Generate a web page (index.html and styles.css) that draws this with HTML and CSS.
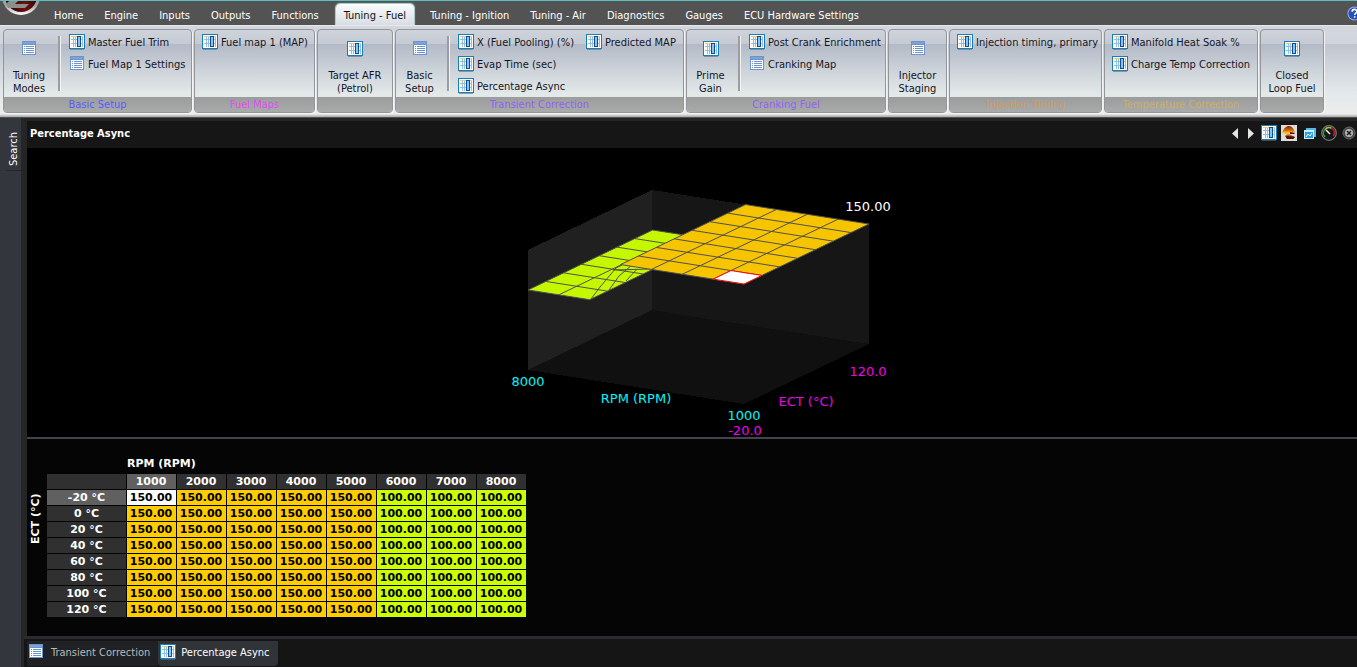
FILE: index.html
```html
<!DOCTYPE html>
<html lang="en">
<head>
<meta charset="utf-8">
<title>Percentage Async</title>
<link rel="stylesheet" href="styles.css">
</head>
<body>
<svg class="defs" aria-hidden="true">
  <defs>
    <linearGradient id="metal" x1="0" y1="0" x2="0" y2="1"><stop offset="0" stop-color="#777"/><stop offset=".75" stop-color="#a5a5a5"/><stop offset="1" stop-color="#fff"/></linearGradient>
    <radialGradient id="ruby" cx=".6" cy=".8" r=".5"><stop offset="0" stop-color="#7c1010"/><stop offset="1" stop-color="#240404"/></radialGradient>
    <linearGradient id="fire" x1="0" y1="0" x2="0" y2="1"><stop offset="0" stop-color="#8e1c08"/><stop offset=".35" stop-color="#d8720c"/><stop offset=".55" stop-color="#ffd23a"/><stop offset=".8" stop-color="#a33008"/><stop offset="1" stop-color="#3d0b04"/></linearGradient>
    <symbol id="i-map" viewBox="0 0 16 16">
      <path fill="#1580b8" d="M0 0h16v15H0z"/><path fill="#fff" d="M1 1h14v13H1z"/>
      <path fill="#fbc56a" d="M2 2h12v1H2z"/>
      <path fill="#8fc0e4" d="M2 5h12v1H2zM2 9h12v1H2zM4 3h1v10H4zM6 3h1v10H6zM13 3h1v10h-1z"/>
      <path fill="#0d4f9c" d="M8 2h4v11H8z"/><path fill="#8cc3ee" d="M9 3h2v9H9z"/>
      <path fill="#5f6a76" opacity=".6" d="M1 15h14v1H1z"/>
    </symbol>
    <symbol id="i-list" viewBox="0 0 16 16">
      <path fill="#6c93cd" d="M1 0h14v14H1z"/><path fill="#7ca2d8" d="M2 1h12v2H2z"/>
      <path fill="#fff" d="M2 4h12v9H2z"/>
      <path fill="#6c93cd" d="M3 5h1v1H3zM5 5h8v1H5zM3 7h1v1H3zM5 7h8v1H5zM3 9h1v1H3zM5 9h8v1H5zM3 11h1v1H3zM5 11h8v1H5z"/>
    </symbol>
  </defs>
</svg>

<header class="menubar">
  <svg class="logo" viewBox="0 0 43 24" aria-label="Application menu" role="img">
    <circle cx="21" cy="-5" r="19" fill="url(#metal)"/>
    <circle cx="21" cy="-5" r="16" fill="url(#ruby)"/>
    <path fill="#8d8d8d" d="M9 0h9l-3 3h14l-4 4H8L6 3z"/>
  </svg>
  <nav class="menu">
    <a href="#">Home</a><a href="#">Engine</a><a href="#">Inputs</a><a href="#">Outputs</a><a href="#">Functions</a>
    <a href="#" class="active" aria-current="page">Tuning - Fuel</a>
    <a href="#">Tuning - Ignition</a><a href="#">Tuning - Air</a><a href="#">Diagnostics</a><a href="#">Gauges</a><a href="#">ECU Hardware Settings</a>
  </nav>
  <button class="help" aria-label="Help">
    <svg viewBox="0 0 16 16"><circle cx="8" cy="8" r="7.500" fill="#9bb4ea"/><circle cx="8" cy="8" r="6.500" fill="#2450b8"/><path d="M5.500 6.200c0-3.600 5-3.300 5-.4 0 1.800-2.300 1.700-2.300 3.700M8.200 11v1.600" fill="none" stroke="#fff" stroke-width="1.700"/></svg>
  </button>
</header>

<section class="ribbon" aria-label="Tuning - Fuel">
  <div class="group w-basic">
    <div class="tools">
      <button class="big"><svg class="icon"><use href="#i-list"/></svg><span>Tuning<br>Modes</span></button>
      <div class="stack split">
        <button class="small"><svg class="icon"><use href="#i-map"/></svg>Master Fuel Trim</button>
        <button class="small"><svg class="icon"><use href="#i-list"/></svg>Fuel Map 1 Settings</button>
      </div>
    </div>
    <div class="caption blue">Basic Setup</div>
  </div>
  <div class="group w-maps">
    <div class="tools"><div class="stack">
      <button class="small"><svg class="icon"><use href="#i-map"/></svg>Fuel map 1 (MAP)</button>
    </div></div>
    <div class="caption pink">Fuel Maps</div>
  </div>
  <div class="group w-afr">
    <div class="tools"><button class="big only"><svg class="icon"><use href="#i-map"/></svg><span>Target AFR<br>(Petrol)</span></button></div>
    <div class="caption"></div>
  </div>
  <div class="group w-transient">
    <div class="tools">
      <button class="big narrow"><svg class="icon"><use href="#i-list"/></svg><span>Basic<br>Setup</span></button>
      <div class="stack split">
        <button class="small"><svg class="icon"><use href="#i-map"/></svg>X (Fuel Pooling) (%)</button>
        <button class="small"><svg class="icon"><use href="#i-map"/></svg>Evap Time (sec)</button>
        <button class="small"><svg class="icon"><use href="#i-map"/></svg>Percentage Async</button>
      </div>
      <div class="stack">
        <button class="small"><svg class="icon"><use href="#i-map"/></svg>Predicted MAP</button>
      </div>
    </div>
    <div class="caption violet">Transient Correction</div>
  </div>
  <div class="group w-crank">
    <div class="tools">
      <button class="big narrow"><svg class="icon"><use href="#i-map"/></svg><span>Prime<br>Gain</span></button>
      <div class="stack split">
        <button class="small"><svg class="icon"><use href="#i-map"/></svg>Post Crank Enrichment</button>
        <button class="small"><svg class="icon"><use href="#i-list"/></svg>Cranking Map</button>
      </div>
    </div>
    <div class="caption violet">Cranking Fuel</div>
  </div>
  <div class="group w-staging">
    <div class="tools"><button class="big only"><svg class="icon"><use href="#i-list"/></svg><span>Injector<br>Staging</span></button></div>
    <div class="caption"></div>
  </div>
  <div class="group w-timing">
    <div class="tools"><div class="stack">
      <button class="small"><svg class="icon"><use href="#i-map"/></svg>Injection timing, primary</button>
    </div></div>
    <div class="caption copper">Injection Timing</div>
  </div>
  <div class="group w-temp">
    <div class="tools"><div class="stack">
      <button class="small"><svg class="icon"><use href="#i-map"/></svg>Manifold Heat Soak %</button>
      <button class="small"><svg class="icon"><use href="#i-map"/></svg>Charge Temp Correction</button>
    </div></div>
    <div class="caption sand">Temperature Correction</div>
  </div>
  <div class="group w-loop">
    <div class="tools"><button class="big only"><svg class="icon"><use href="#i-map"/></svg><span>Closed<br>Loop Fuel</span></button></div>
    <div class="caption"></div>
  </div>
</section>

<div class="workspace">
  <aside class="sidebar"><button class="search">Search</button></aside>
  <main class="document">
    <div class="panel">
      <div class="titlebar">
        <h1>Percentage Async</h1>
        <div class="titletools">
          <button class="arrow" aria-label="Previous"><svg viewBox="0 0 12 16"><path fill="#e4e4e4" d="M9 3v11L3 8.500z"/></svg></button>
          <button class="arrow" aria-label="Next"><svg viewBox="0 0 12 16"><path fill="#e4e4e4" d="M3 3v11l6-5.500z"/></svg></button>
          <button aria-label="Table view"><svg viewBox="0 0 16 16"><use href="#i-map"/></svg></button>
          <button aria-label="Surface view"><svg viewBox="0 0 16 16"><path fill="#ddd" d="M0 0h16v16H0z"/><path fill="url(#fire)" d="M1 8C3 3 5 1 8 1s5 3 6 7l-3-1-3 2 6 3-2 2H6l-2-3 2-2z"/><path fill="#4a0d05" d="M5 11l9 1-2 2H6zM9 7l5 1-1 1H9z"/></svg></button>
          <button aria-label="Windows"><svg viewBox="0 0 16 16"><path fill="#58b9e6" d="M5 3h10v9H5z"/><path fill="#c9effb" d="M3 5h10v9H3z"/><path fill="#299fd8" d="M4 7h8v6H4z"/><path d="M5 12l2-3 2 2 2-3" fill="none" stroke="#fff"/></svg></button>
          <button aria-label="Gauge"><svg viewBox="0 0 16 16"><circle cx="8" cy="8" r="7.300" fill="#181818" stroke="#757575" stroke-width="1.300"/><path d="M4 12A5.500 5.500 0 0 1 4 4.500" fill="none" stroke="#23a548" stroke-width="1.500"/><path d="M4 4.500A5.500 5.500 0 0 1 10.500 3.200" fill="none" stroke="#a9c93a" stroke-width="1.500"/><path d="M10.500 3.200A5.500 5.500 0 0 1 12.500 11" fill="none" stroke="#c81e1e" stroke-width="1.500"/><path d="M5 5l4 4" stroke="#fff" stroke-width="1.400"/></svg></button>
          <button aria-label="Close"><svg viewBox="0 0 16 16"><circle cx="8" cy="8" r="6" fill="#454545" stroke="#666"/><circle cx="8" cy="8" r="4" fill="#b5b5b5"/><path d="M6 6l4 4M10 6l-4 4" stroke="#222" stroke-width="1.600"/></svg></button>
        </div>
      </div>
      <div class="chart">
        <svg viewBox="492 149 400 288" role="img" aria-label="Surface plot of RPM and ECT">
          <g shape-rendering="crispEdges">
            <path fill="#202020" d="M528 250L652 190V310L528 370z"/>
            <path fill="#161616" d="M652 190L869 224V344L652 310z"/>
            <path fill="#101010" d="M652 310L869 344L744 404L528 370z"/>
          </g>
          <g class="mesh">
            <g transform="matrix(-30.86 -4.86 17.800 -8.570 744 324)">
              <path fill="#c5f800" d="M5 0H7V7H5z"/>
              <path d="M6 0V7M5 1H7M5 2H7M5 3H7M5 4H7M5 5H7M5 6H7"/>
            </g>
            <path d="M591 299L600 287L616 268L622 265M609 290L619 276L632 265M626 281L637 269M613 270L650 269"/>
            <g transform="matrix(-30.86 -4.86 17.860 -8.570 744 284)">
              <path fill="#f7c400" d="M0 0H4V7H0z"/>
              <path d="M1 0V7M2 0V7M3 0V7M0 1H4M0 2H4M0 3H4M0 4H4M0 5H4M0 6H4"/>
              <path class="picked" d="M0 0H1V1H0z"/>
            </g>
          </g>
          <g class="labels">
            <text x="868" y="211" fill="#fff">150.00</text>
            <text class="rpm" x="528" y="386">8000</text>
            <text class="rpm" x="636" y="403">RPM (RPM)</text>
            <text class="rpm" x="744" y="420">1000</text>
            <text class="ect" x="745" y="435">-20.0</text>
            <text class="ect" x="806" y="406">ECT (°C)</text>
            <text class="ect" x="868" y="376">120.0</text>
          </g>
        </svg>
      </div>
      <div class="grid">
        <div class="xaxis">RPM (RPM)</div>
        <div class="yaxis">ECT (°C)</div>
        <table>
          <thead><tr><th></th><th class="on">1000</th><th>2000</th><th>3000</th><th>4000</th><th>5000</th><th>6000</th><th>7000</th><th>8000</th></tr></thead>
          <tbody>
            <tr><th class="on">-20 °C</th><td class="sel">150.00</td><td>150.00</td><td>150.00</td><td>150.00</td><td>150.00</td><td class="lo">100.00</td><td class="lo">100.00</td><td class="lo">100.00</td></tr>
            <tr><th>0 °C</th><td>150.00</td><td>150.00</td><td>150.00</td><td>150.00</td><td>150.00</td><td class="lo">100.00</td><td class="lo">100.00</td><td class="lo">100.00</td></tr>
            <tr><th>20 °C</th><td>150.00</td><td>150.00</td><td>150.00</td><td>150.00</td><td>150.00</td><td class="lo">100.00</td><td class="lo">100.00</td><td class="lo">100.00</td></tr>
            <tr><th>40 °C</th><td>150.00</td><td>150.00</td><td>150.00</td><td>150.00</td><td>150.00</td><td class="lo">100.00</td><td class="lo">100.00</td><td class="lo">100.00</td></tr>
            <tr><th>60 °C</th><td>150.00</td><td>150.00</td><td>150.00</td><td>150.00</td><td>150.00</td><td class="lo">100.00</td><td class="lo">100.00</td><td class="lo">100.00</td></tr>
            <tr><th>80 °C</th><td>150.00</td><td>150.00</td><td>150.00</td><td>150.00</td><td>150.00</td><td class="lo">100.00</td><td class="lo">100.00</td><td class="lo">100.00</td></tr>
            <tr><th>100 °C</th><td>150.00</td><td>150.00</td><td>150.00</td><td>150.00</td><td>150.00</td><td class="lo">100.00</td><td class="lo">100.00</td><td class="lo">100.00</td></tr>
            <tr><th>120 °C</th><td>150.00</td><td>150.00</td><td>150.00</td><td>150.00</td><td>150.00</td><td class="lo">100.00</td><td class="lo">100.00</td><td class="lo">100.00</td></tr>
          </tbody>
        </table>
      </div>
    </div>
    <nav class="doctabs">
      <a href="#"><svg class="icon"><use href="#i-list"/></svg>Transient Correction</a>
      <a href="#" class="current" aria-current="page"><svg class="icon"><use href="#i-map"/></svg>Percentage Async</a>
    </nav>
  </main>
</div>
</body>
</html>
```

FILE: styles.css
```css
* { box-sizing: border-box; }
body {
  margin: 0;
  height: 100vh;
  display: flex;
  flex-direction: column;
  overflow: hidden;
  background: #252525;
  color: #fff;
  font: 11px/13px "DejaVu Sans Condensed", "DejaVu Sans", sans-serif;
}
button { margin: 0; padding: 0; border: 0; background: none; color: inherit; font: inherit; }
a { color: inherit; text-decoration: none; }
svg { display: block; flex: none; }
.defs { position: absolute; width: 0; height: 0; }
.icon { width: 16px; height: 16px; }

.menubar {
  display: flex;
  height: 25px;
  flex: none;
  background: #535353;
  border-top: 1px solid #5ac0c0;
}
.logo { width: 43px; height: 24px; }
.menu { display: flex; flex: 1; align-items: flex-end; white-space: nowrap; }
.menu a { padding: 5px 10px 3px 11px; }
.menu .active {
  margin: 0 5px 0 7px;
  padding: 5px 8px 3px;
  color: #111;
  background: linear-gradient(#f8fdfd, #d8dce4);
  border-radius: 4px 4px 0 0;
  box-shadow: 0 0 1px 1px #b9d4d6;
}
.help { align-self: center; width: 10px; overflow: hidden; }
.help svg { width: 15px; height: 15px; }

.ribbon {
  display: flex;
  flex: none;
  gap: 2px;
  height: 92px;
  padding: 3px 3px 4px;
  background: linear-gradient(#d4d7de 0, #d0d4dc 18px, #bfc5cf 18px, #e3e8ea 66px, #ececec 88px, #8d8d8d 92px);
  border-top: 1px solid #e8e8e8;
  color: #151525;
}
.group {
  display: flex;
  flex-direction: column;
  flex: none;
  border: 1px solid #929599;
  border-radius: 4px;
  overflow: hidden;
  background: linear-gradient(#cfd3db 0, #c5cad3 14px, #b3bac7 14px, #e3e9e9 64px);
  box-shadow: 1px 1px 0 #f5f5f5;
}
.w-basic { width: 189px; }
.w-maps { width: 121px; }
.w-afr { width: 76px; }
.w-transient { width: 289px; }
.w-crank { width: 200px; }
.w-staging { width: 59px; }
.w-timing { width: 153px; }
.w-temp { width: 154px; }
.w-loop { width: 64px; }
.tools { display: flex; flex: 1; white-space: nowrap; }
.big {
  display: flex;
  flex-direction: column;
  flex: none;
  width: 54px;
  align-items: center;
  gap: 12px;
  padding: 11px 4px 0 0;
  text-align: center;
}
.narrow { width: 51px; }
.only { flex: 1; padding-right: 0; }
.stack { display: flex; flex-direction: column; gap: 6px; padding: 4px 5px 0 7px; }
.stack + .stack { padding-left: 7px; }
.split { position: relative; padding-left: 11px; }
.split::before {
  content: "";
  position: absolute;
  left: 0;
  top: 6px;
  width: 2px;
  height: 55px;
  background: #9a9da3;
  border-right: 1px solid #f2f2f2;
}
.small { display: flex; align-items: center; gap: 3px; height: 16px; }
.caption {
  height: 15px;
  padding-top: 1px;
  text-align: center;
  background: linear-gradient(#9b9d9d, #a9abab);
}
.blue { color: #5b5bff; }
.pink { color: #e24cf0; }
.violet { color: #9062f5; }
.copper { color: #d09a66; }
.sand { color: #ccb060; }

.workspace { display: flex; flex: 1; min-height: 0; border-top: 1px solid #505050; }
.sidebar {
  width: 24px;
  flex: none;
  background: #33363c;
  border-right: 3px solid #24262a;
}
.search {
  writing-mode: vertical-rl;
  transform: rotate(180deg);
  display: block;
  margin-left: 6px;
  padding-top: 4px;
  height: 53px;
  width: 15px;
  border-top: 1px solid #24262a;
  line-height: 15px;
  text-align: left;
}
.document { display: flex; flex-direction: column; flex: 1; min-width: 0; background: #17181b; }
.panel {
  display: flex;
  flex-direction: column;
  flex: 1;
  min-height: 0;
  border-top: 3px solid #252525;
  border-left: 3px solid #252525;
  background: #050505;
}
.titlebar {
  display: flex;
  align-items: center;
  justify-content: space-between;
  flex: none;
  height: 27px;
  padding-left: 3px;
  background: #161616;
}
.titlebar h1 { margin: 0; padding-bottom: 3px; font-size: 11px; line-height: 13px; }
.titletools { display: flex; gap: 4px; padding-bottom: 3px; }
.titletools button, .titletools svg { width: 16px; height: 16px; }
.titletools .arrow, .titletools .arrow svg { width: 12px; }
.chart {
  display: flex;
  justify-content: center;
  align-items: center;
  flex: 1;
  min-height: 0;
  background: #000;
  border-bottom: 2px solid #45424d;
}
.chart svg { width: 400px; height: 288px; }
.mesh path { stroke: #505050; stroke-width: 1; vector-effect: non-scaling-stroke; }
.mesh path:not([fill]) { fill: none; }
.mesh .picked:not([fill]) { fill: #fff; stroke: #f00; }
.labels { font: 13px "DejaVu Sans", sans-serif; text-anchor: middle; }
.rpm { fill: #00f6f6; }
.ect { fill: #f000f0; }
.grid {
  display: grid;
  grid-template-columns: 20px auto;
  justify-content: start;
  flex: none;
  padding: 17px 0 18px;
  font: bold 11px/15px "DejaVu Sans", sans-serif;
}
.xaxis { grid-column: 2; padding: 0 0 3px 80px; }
.yaxis {
  writing-mode: vertical-rl;
  transform: rotate(180deg);
  text-align: center;
  line-height: 18px;
  padding-top: 54px;
}
table { border-collapse: separate; border-spacing: 0; table-layout: fixed; width: 480px; }
th, td {
  height: 16px;
  padding: 0 1px 0 0;
  text-align: center;
  border-right: 1px solid #050505;
  border-bottom: 1px solid #050505;
  line-height: 15px;
}
th:first-child { width: 80px; padding: 0; }
th { background: #303030; }
th.on { background: #606060; }
td { background: #fc0; color: #000; }
td.lo { background: #cf0; }
td.sel { background: #fff; }
.doctabs {
  display: flex;
  flex: none;
  height: 31px;
  padding: 2px 0 1px 3px;
  background: #151516;
  border-top: 3px solid #292b2f;
  color: #b9b9b9;
}
.doctabs a { display: flex; align-items: center; gap: 7px; padding: 0 8px 3px 1px; background: #1f2124; }
.doctabs .current { color: #fff; background: #303338; border-radius: 0 0 4px 4px; gap: 5px; padding-left: 2px; }
```
